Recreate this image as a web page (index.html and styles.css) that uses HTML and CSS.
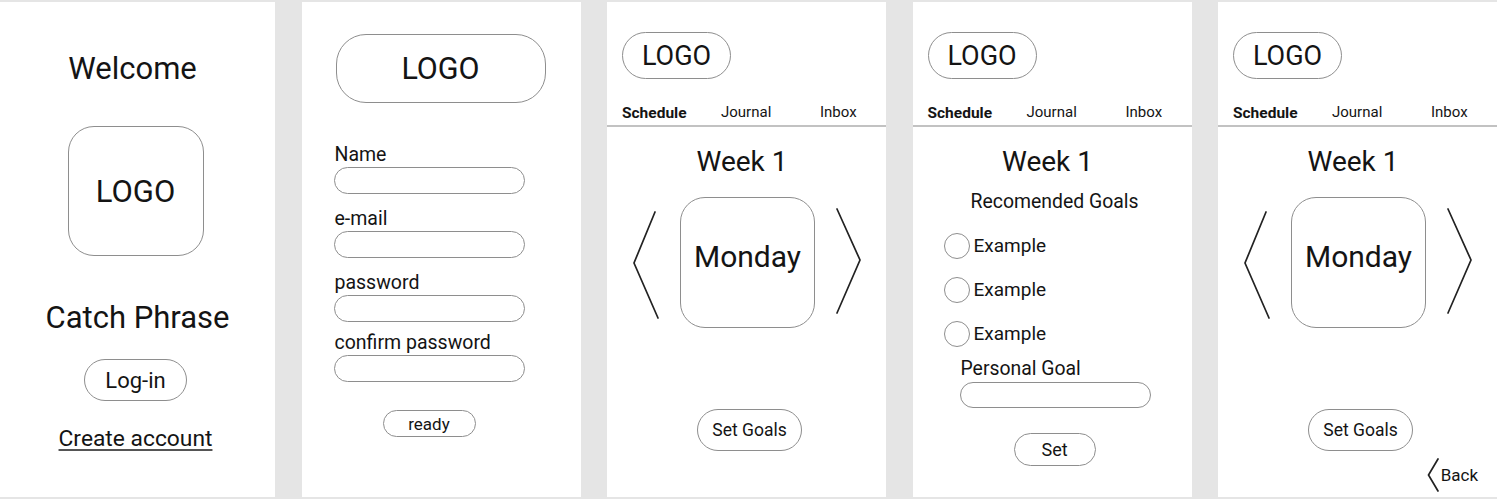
FILE: index.html
```html
<!DOCTYPE html>
<html lang="en">
<head>
<meta charset="utf-8">
<title>App wireframes</title>
<link rel="stylesheet" href="styles.css">
</head>
<body>
<div class="board">

  <section class="screen welcome-screen">
    <h1 class="welcome-title">Welcome</h1>
    <div class="logo-square">LOGO</div>
    <h2 class="catch-phrase">Catch Phrase</h2>
    <button class="btn btn-login">Log-in</button>
    <a class="create-link">Create account</a>
  </section>

  <section class="screen signup-screen">
    <div class="logo-wide">LOGO</div>
    <div class="signup-form">
      <div class="field"><span class="field-label">Name</span><span class="input"></span></div>
      <div class="field"><span class="field-label">e-mail</span><span class="input"></span></div>
      <div class="field"><span class="field-label">password</span><span class="input"></span></div>
      <div class="field field-tight"><span class="field-label">confirm password</span><span class="input"></span></div>
      <button class="btn btn-ready">ready</button>
    </div>
  </section>

  <section class="screen app-screen">
    <header class="app-header">
      <div class="logo-pill">LOGO</div>
      <nav class="tabs"><span class="tab tab-active">Schedule</span><span class="tab">Journal</span><span class="tab">Inbox</span></nav>
    </header>
    <div class="app-body">
      <h3 class="week">Week 1</h3>
      <div class="day-carousel">
        <svg class="chev" viewBox="0 0 28 131" width="28" height="131"><path d="M24 15 L3 66 L27 121"/></svg>
        <div class="day-card">Monday</div>
        <svg class="chev" viewBox="0 0 28 131" width="28" height="131"><path d="M1 12 L24 63 L1 116"/></svg>
      </div>
      <button class="btn btn-goals">Set Goals</button>
    </div>
  </section>

  <section class="screen app-screen">
    <header class="app-header">
      <div class="logo-pill">LOGO</div>
      <nav class="tabs"><span class="tab tab-active">Schedule</span><span class="tab">Journal</span><span class="tab">Inbox</span></nav>
    </header>
    <div class="app-body goals-body">
      <h3 class="week">Week 1</h3>
      <p class="rec-title">Recomended Goals</p>
      <ul class="goal-list">
        <li class="goal"><span class="radio"></span><span class="goal-text">Example</span></li>
        <li class="goal"><span class="radio"></span><span class="goal-text">Example</span></li>
        <li class="goal"><span class="radio"></span><span class="goal-text">Example</span></li>
      </ul>
      <div class="personal">
        <span class="personal-label">Personal Goal</span>
        <span class="input"></span>
      </div>
      <button class="btn btn-set">Set</button>
    </div>
  </section>

  <section class="screen app-screen">
    <header class="app-header">
      <div class="logo-pill">LOGO</div>
      <nav class="tabs"><span class="tab tab-active">Schedule</span><span class="tab">Journal</span><span class="tab">Inbox</span></nav>
    </header>
    <div class="app-body">
      <h3 class="week">Week 1</h3>
      <div class="day-carousel">
        <svg class="chev" viewBox="0 0 28 131" width="28" height="131"><path d="M24 15 L3 66 L27 121"/></svg>
        <div class="day-card">Monday</div>
        <svg class="chev" viewBox="0 0 28 131" width="28" height="131"><path d="M1 12 L24 63 L1 116"/></svg>
      </div>
      <button class="btn btn-goals">Set Goals</button>
      <div class="back-row">
        <svg class="back-chev" viewBox="0 0 13 34" width="13" height="34"><path d="M11 1 L1.5 17 L11 33"/></svg>
        <span class="back-text">Back</span>
      </div>
    </div>
  </section>

</div>
</body>
</html>
```

FILE: styles.css
```css
* { box-sizing: border-box; }

html, body {
  margin: 0;
  padding: 0;
  background: #e5e5e5;
  overflow: hidden;
}

body {
  font-family: Roboto, "Noto Sans", sans-serif;
  color: #141414;
}

.board {
  display: grid;
  grid-template-columns: repeat(5, 279px);
  column-gap: 26.5px;
  margin-left: -4px;
  padding-top: 2px;
}

.screen {
  background: #fff;
  height: 495px;
  display: flex;
  flex-direction: column;
}

/* generic pill button */
.btn {
  font-family: inherit;
  color: #141414;
  background: #fff;
  border: 1px solid #8e8e8e;
  border-radius: 999px;
  padding: 0;
  display: flex;
  align-items: center;
  justify-content: center;
}

.input {
  display: block;
  width: 191px;
  height: 27px;
  border: 1px solid #8e8e8e;
  border-radius: 14px;
}

/* ---------- screen 1 ---------- */
.welcome-screen {
  align-items: center;
  padding-top: 49px;
}

.welcome-title,
.catch-phrase {
  margin: 0;
  font-weight: 400;
  font-size: 31px;
  line-height: 36px;
}

.welcome-title { padding-right: 6px; }

.logo-square {
  margin-top: 39px;
  width: 136px;
  height: 130px;
  border: 1px solid #8e8e8e;
  border-radius: 26px;
  display: flex;
  align-items: center;
  justify-content: center;
  font-size: 31px;
}

.catch-phrase {
  margin-top: 44px;
  padding-left: 4px;
}

.btn-login {
  margin-top: 23px;
  width: 103px;
  height: 42px;
  font-size: 22px;
}

.create-link {
  margin-top: 25px;
  font-size: 22.8px;
  line-height: 26px;
  text-decoration: underline;
  text-decoration-thickness: 1.5px;
  text-underline-offset: 3px;
  text-decoration-color: #555;
}

/* ---------- screen 2 ---------- */
.signup-screen {
  align-items: center;
  padding-top: 32px;
}

.logo-wide {
  width: 210px;
  height: 69px;
  border: 1px solid #8e8e8e;
  border-radius: 30px;
  display: flex;
  align-items: center;
  justify-content: center;
  font-size: 30.5px;
  margin-left: -1px;
}

.signup-form {
  align-self: stretch;
  padding-left: 32px;
  margin-top: 41px;
  display: flex;
  flex-direction: column;
  align-items: flex-start;
}

.field {
  display: flex;
  flex-direction: column;
  margin-bottom: 14px;
}

.field-tight { margin-bottom: 0; }

.field + .field-tight { margin-top: -4px; }

.field-label {
  font-size: 19.5px;
  line-height: 21px;
  margin-left: 1px;
}

.field .input { margin-top: 2px; }

.btn-ready {
  margin-top: 28px;
  margin-left: 49px;
  width: 93px;
  height: 27px;
  font-size: 17px;
}

/* ---------- app screens ---------- */
.app-header {
  padding: 30px 15px 3px;
  border-bottom: 2px solid #c2c2c2;
}

.logo-pill {
  width: 109px;
  height: 47px;
  border: 1px solid #8e8e8e;
  border-radius: 24px;
  display: flex;
  align-items: center;
  justify-content: center;
  font-size: 27px;
}

.tabs {
  margin-top: 24px;
  display: grid;
  grid-template-columns: 99px 99px auto;
  align-items: start;
  font-size: 15px;
  line-height: 18px;
}

.tab-active {
  font-weight: 700;
  font-size: 15.5px;
  padding-top: 1px;
}

.app-body {
  display: flex;
  flex-direction: column;
  align-items: center;
}

.week {
  margin: 19px 0 0;
  padding-right: 9px;
  font-weight: 400;
  font-size: 28px;
  line-height: 32px;
}

.day-carousel {
  align-self: stretch;
  margin-top: 19px;
  padding-left: 24px;
  display: flex;
  align-items: flex-start;
  gap: 21px;
}

.chev path,
.back-chev path {
  fill: none;
  stroke: #222;
  stroke-width: 1.7;
  stroke-linecap: round;
  stroke-linejoin: miter;
}

.day-card {
  width: 135px;
  height: 131px;
  border: 1px solid #8e8e8e;
  border-radius: 25px;
  display: flex;
  align-items: center;
  justify-content: center;
  padding-bottom: 12px;
  font-size: 30px;
}

.btn-goals {
  margin-top: 81px;
  margin-left: 6px;
  width: 105px;
  height: 42px;
  font-size: 17.5px;
}

.back-row {
  align-self: flex-end;
  margin-top: 7px;
  margin-right: 19px;
  display: flex;
  align-items: center;
  gap: 1px;
}

.back-text {
  font-size: 17px;
  line-height: 20px;
}

/* ---------- goals screen ---------- */
.rec-title {
  margin: 12px 0 0;
  padding-left: 5px;
  font-size: 19.4px;
  line-height: 24px;
}

.goal-list {
  align-self: stretch;
  list-style: none;
  margin: 19px 0 0;
  padding: 0 0 0 31px;
  display: flex;
  flex-direction: column;
  gap: 18px;
}

.goal {
  display: flex;
  align-items: center;
  height: 26px;
}

.radio {
  width: 26px;
  height: 26px;
  border: 1px solid #8e8e8e;
  border-radius: 50%;
}

.goal-text {
  margin-left: 4px;
  font-size: 19px;
  padding-bottom: 2px;
}

.personal {
  align-self: stretch;
  margin-top: 11px;
  padding-left: 47px;
  display: flex;
  flex-direction: column;
  align-items: flex-start;
}

.personal-label {
  font-size: 19.4px;
  line-height: 22px;
  margin-left: 1px;
}

.personal .input {
  margin-top: 2px;
  height: 26px;
}

.btn-set {
  margin-top: 25px;
  margin-left: 5px;
  width: 82px;
  height: 33px;
  font-size: 18px;
}
```
